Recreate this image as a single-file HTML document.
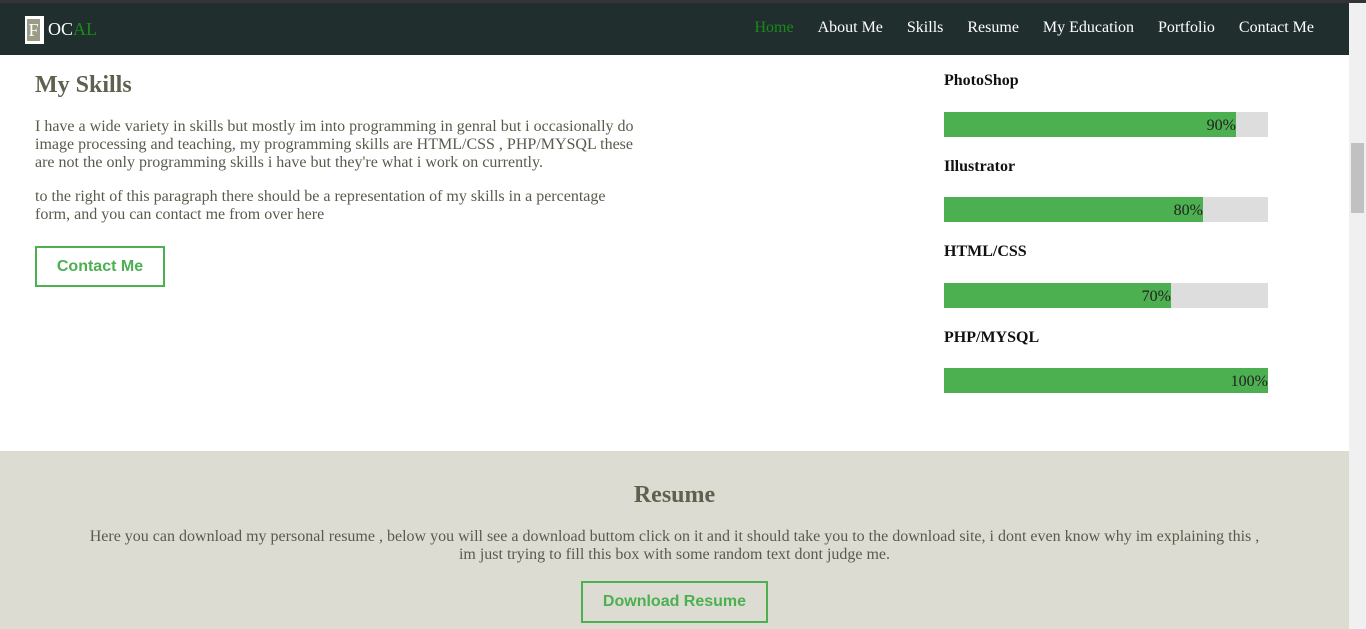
<!DOCTYPE html>
<html><head><style>
body{margin:0;width:1366px;height:629px;overflow:hidden;font-family:"Liberation Serif",serif;background:#fff;position:relative}
.top{position:absolute;left:0;top:0;width:1366px;height:3px;background:#333338}
nav{position:absolute;left:0;top:3px;width:1349px;height:52px;background:#202e2e}
.logo{position:absolute;left:25px;top:13px;width:19px;height:28px;background:#fff}
.logo span{position:absolute;left:2px;top:3px;width:13px;height:22px;background:#9a9c86;color:#fff;font-size:18px;line-height:22px;text-align:center}
.lt{position:absolute;left:48px;top:16px;font-size:18px;color:#fff}
.links{position:absolute;right:35px;top:16px;font-size:16px;color:#fff}
.links span{margin-left:24px}
.abs{position:absolute}
h2{margin:0;color:#5f614e;font-size:24px}
p.t{color:#5a5a4c;font-size:16px;line-height:18px;margin:0}
.btn{position:absolute;border:2px solid #4caf50;color:#4caf50;font-family:"Liberation Sans",sans-serif;font-weight:bold;font-size:16px;text-align:center;box-sizing:border-box}
.lbl{position:absolute;left:944px;font-weight:bold;font-size:16px;color:#111}
.bar{position:absolute;left:944px;width:324px;height:25px;background:#ddd}
.bar div{height:25px;background:#4caf50;text-align:right;font-size:16px;line-height:27px;color:#222}
.res{position:absolute;left:0;top:451px;width:1349px;height:178px;background:#dcdcd3}
.sb{position:absolute;left:1349px;top:3px;width:17px;height:626px;background:#f0f0f0}
.thumb{position:absolute;left:1351px;top:143px;width:13px;height:70px;background:#c1c1c1}
</style></head><body>
<div class="top"></div>
<nav><div class="logo"><span>F</span></div><div class="lt">OC<span style="color:#1a8a1a">AL</span></div>
<div class="links"><span style="color:#1a8a1a">Home</span><span>About Me</span><span>Skills</span><span>Resume</span><span>My Education</span><span>Portfolio</span><span>Contact Me</span></div></nav>
<h2 class="abs" style="left:35px;top:72px">My Skills</h2>
<p class="t abs" style="left:35px;top:118px;width:605px">I have a wide variety in skills but mostly im into programming in genral but i occasionally do image processing and teaching, my programming skills are HTML/CSS , PHP/MYSQL these are not the only programming skills i have but they're what i work on currently.</p>
<p class="t abs" style="left:35px;top:188px;width:605px">to the right of this paragraph there should be a representation of my skills in a percentage form, and you can contact me from over here</p>
<div class="btn" style="left:35px;top:246px;width:130px;height:41px;line-height:37px">Contact Me</div>
<div class="lbl" style="top:72px">PhotoShop</div><div class="bar" style="top:112px"><div style="width:292px">90%</div></div>
<div class="lbl" style="top:158px">Illustrator</div><div class="bar" style="top:197px"><div style="width:259px">80%</div></div>
<div class="lbl" style="top:243px">HTML/CSS</div><div class="bar" style="top:283px"><div style="width:227px">70%</div></div>
<div class="lbl" style="top:329px">PHP/MYSQL</div><div class="bar" style="top:368px"><div style="width:324px">100%</div></div>
<div class="res">
<h2 class="abs" style="left:0;width:1349px;text-align:center;top:31px">Resume</h2>
<p class="t abs" style="left:84px;width:1181px;text-align:center;top:77px">Here you can download my personal resume , below you will see a download buttom click on it and it should take you to the download site, i dont even know why im explaining this , im just trying to fill this box with some random text dont judge me.</p>
<div class="btn" style="left:581px;top:130px;width:187px;height:42px;line-height:38px">Download Resume</div>
</div>
<div class="sb"></div><div class="thumb"></div>
</body></html>
